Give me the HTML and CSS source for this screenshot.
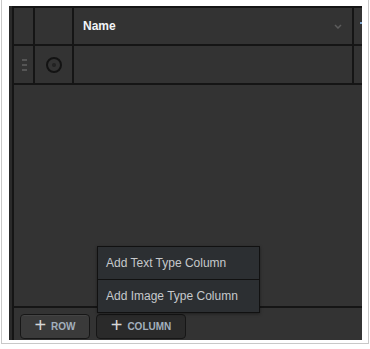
FILE: index.html
```html
<!DOCTYPE html>
<html lang="en">
<head>
    <meta charset="UTF-8">
    <meta name="viewport" content="width=device-width, initial-scale=1.0">
    <title>Grid Editor</title>
    <link rel="stylesheet" href="styles.css">
</head>
<body>
    <div class="card">
        <div class="editor">
            <div class="grid">
                <div class="row head">
                    <div class="cell handle-col"></div>
                    <div class="cell select-col"></div>
                    <div class="cell name-col">
                        <span class="col-title">Name</span>
                        <svg class="chevron" width="8" height="5" viewBox="0 0 8 5">
                            <polyline points="1,1 4,4 7,1" fill="none" stroke="#5c5c5c" stroke-width="1.5"/>
                        </svg>
                    </div>
                    <div class="cell extra-col"><span class="peek"></span></div>
                </div>
                <div class="row data">
                    <div class="cell handle-col">
                        <span class="grip"><i></i><i></i><i></i></span>
                    </div>
                    <div class="cell select-col">
                        <span class="radio"></span>
                    </div>
                    <div class="cell name-col"></div>
                    <div class="cell extra-col"></div>
                </div>
            </div>
            <div class="footer">
                <button type="button" class="btn">
                    <span class="plus">+</span> ROW
                </button>
                <div class="col-wrap">
                    <button type="button" class="btn active">
                        <span class="plus">+</span> COLUMN
                    </button>
                    <ul class="menu">
                        <li>Add Text Type Column</li>
                        <li>Add Image Type Column</li>
                    </ul>
                </div>
            </div>
        </div>
    </div>
</body>
</html>
```

FILE: styles.css
```css
body {
    margin: 0;
    background-color: #fff;
    font-family: "Liberation Sans", Arial, sans-serif;
}
.card {
    margin-left: 1px;
    width: 353px;
    height: 334px;
    padding: 6px 6px 3px 7px;
    border: 1px solid #c8c8c8;
    border-top: 0;
    background-color: #fff;
}
.editor {
    width: 353px;
    height: 334px;
    box-sizing: border-box;
    background-color: #333;
    border-left: 3px solid #2a2a2a;
    display: flex;
    flex-direction: column;
}
.grid {
    flex: 1;
    border-left: 2px solid #151515;
    border-top: 2px solid #151515;
    overflow: hidden;
}
.row {
    display: flex;
    border-bottom: 2px solid #151515;
}
.row.head {
    height: 36px;
}
.row.data {
    height: 37px;
}
.cell {
    border-right: 2px solid #151515;
    display: flex;
    align-items: center;
    justify-content: center;
}
.handle-col {
    width: 19px;
}
.select-col {
    width: 37px;
}
.name-col {
    width: 269px;
    padding-left: 9px;
    justify-content: space-between;
}
.extra-col {
    flex: 1;
    border-right: 0;
    justify-content: flex-end;
}
.col-title {
    color: #f2f5f8;
    font-size: 12px;
    font-weight: bold;
}
.chevron {
    margin-right: 10px;
}
.peek {
    width: 2px;
    height: 2px;
    margin-bottom: 6px;
    background-color: #7fa8d0;
}
.grip {
    display: flex;
    flex-direction: column;
    gap: 3px;
    margin-left: 2px;
}
.grip i {
    display: block;
    width: 5px;
    height: 2px;
    background-color: #555;
}
.radio {
    width: 12px;
    height: 12px;
    border: 2px solid #131313;
    border-radius: 50%;
    display: flex;
    align-items: center;
    justify-content: center;
}
.radio::after {
    content: "";
    width: 4px;
    height: 4px;
    border-radius: 50%;
    background-color: #222;
}
.footer {
    height: 34px;
    box-sizing: border-box;
    border-left: 2px solid #151515;
    border-top: 2px solid #151515;
    padding: 6px 0 0 6px;
    display: flex;
    gap: 6px;
}
.btn {
    height: 25px;
    width: 70px;
    box-sizing: border-box;
    background-color: #3a3a3a;
    border: 1px solid #161616;
    border-radius: 4px;
    box-shadow: inset 0 1px 0 #444;
    color: #a3b0bd;
    font-family: "Liberation Sans", Arial, sans-serif;
    font-size: 10px;
    font-weight: bold;
    padding: 0;
    display: flex;
    align-items: center;
    justify-content: center;
    gap: 5px;
    cursor: pointer;
}
.btn.active {
    width: 90px;
    background-color: #2a2a2a;
    box-shadow: none;
}
.plus {
    color: #d6d6d6;
    font-size: 20px;
    font-weight: normal;
    line-height: 1;
    margin-top: -3px;
}
.col-wrap {
    position: relative;
}
.menu {
    position: absolute;
    left: 1px;
    bottom: 27px;
    width: 161px;
    margin: 0;
    padding: 0;
    list-style: none;
    background-color: #2c2f32;
    border: 1px solid #111;
    box-shadow: 0 1px 3px rgba(0, 0, 0, 0.4);
}
.menu li {
    height: 32px;
    line-height: 32px;
    padding-left: 8px;
    color: #c6c9cc;
    font-size: 12px;
}
.menu li + li {
    border-top: 1px solid #111;
}
```
